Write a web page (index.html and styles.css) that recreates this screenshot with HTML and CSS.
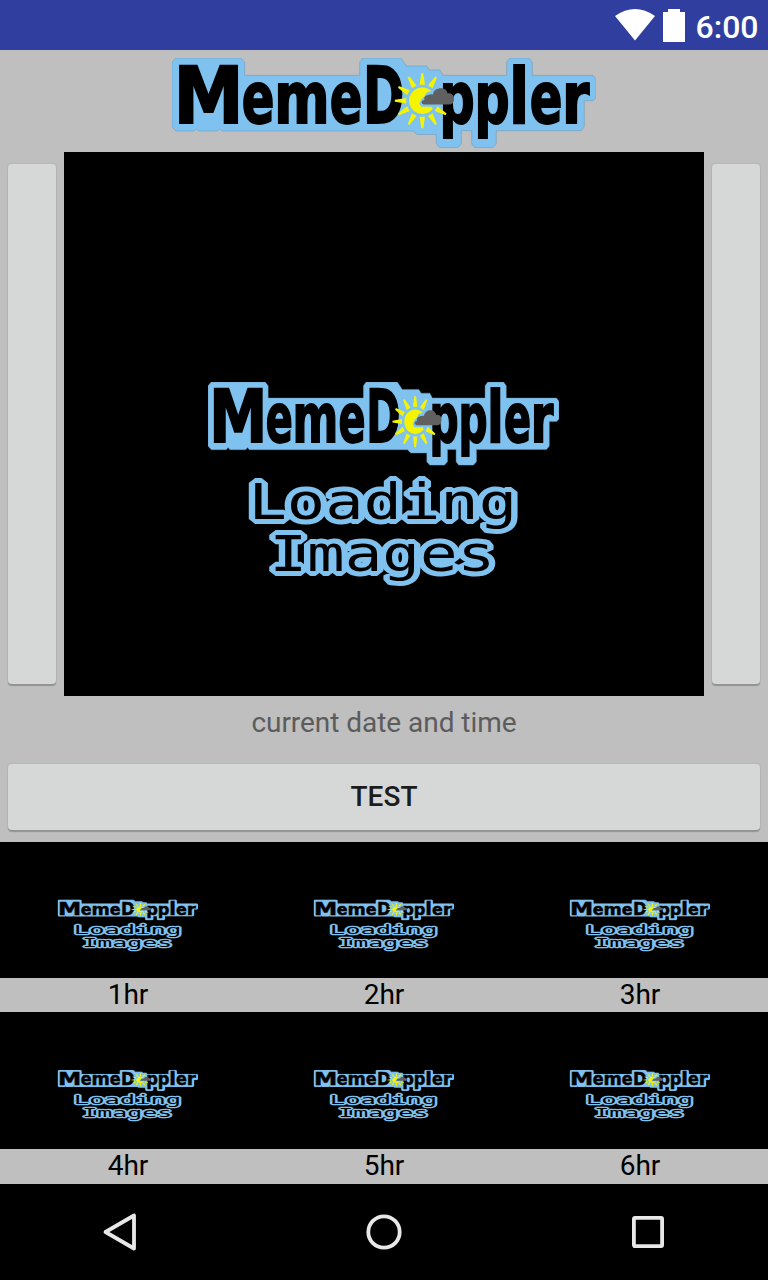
FILE: index.html
```html
<!DOCTYPE html>
<html lang="en">
<head>
<meta charset="utf-8">
<title>MemeDoppler</title>
<link rel="stylesheet" href="styles.css">
</head>
<body>
<svg class="defs" aria-hidden="true">
  <defs>
    <symbol id="wordmark" viewBox="0 0 424 90" preserveAspectRatio="none">
      <path class="plate" d="M4 0H69L72.7 4V17.3H187.7V4L191 0H228.7L234.7 8H254.7L257.5 12H268L271 17.3H334.7V4L338 0H357L360.3 4V17.3H421L424 21V40L421 42.7H412.3V69L409 72.7H324.3V86L320.5 89.7H303L299.7 86V72.7H289.3V86L285.5 89.7H268L264.3 86V76.5H245L241 73H50L47.7 70.7L45.5 73H26.5L24.3 70.7L22 73H4L0 69V4Z"/>
      <g class="letters"><text class="cap" transform="translate(1.5 65) scale(.904 1)">M</text><text transform="translate(69.7 65) scale(.67 1)">e</text><text transform="translate(102.2 65) scale(.738 1)">m</text><text transform="translate(157.7 65) scale(.67 1)">e</text><text class="cap" transform="translate(191.1 65) scale(.637 1)">D</text><text transform="translate(267.6 65) scale(.683 1)">p</text><text transform="translate(302.6 65) scale(.683 1)">p</text><text class="tall" transform="translate(336.9 65) scale(.775 1)">l</text><text transform="translate(357.7 65) scale(.67 1)">e</text><text transform="translate(390 65) scale(.77 1)">r</text></g>
      <g class="sun" transform="translate(250.3 42.7)">
        <path id="ray" d="M-2.7-16L-1-27.5H1L2.7-16Z"/>
        <use href="#ray" transform="rotate(30)"/>
        <use href="#ray" transform="rotate(120)"/>
        <use href="#ray" transform="rotate(150)"/>
        <use href="#ray" transform="rotate(180)"/>
        <use href="#ray" transform="rotate(210)"/>
        <use href="#ray" transform="rotate(240)"/>
        <use href="#ray" transform="rotate(270)"/>
        <use href="#ray" transform="rotate(300)"/>
        <use href="#ray" transform="rotate(330)"/>
        <path d="M9-9.600A13.200 13.200 0 1 0 10.500 8L9 6H-1L-3 3L-1-1.500L2-4L4-8Z"/>
      </g>
      <path class="cloud" d="M252 46.500Q249.500 46 249.500 44Q250 42 252.500 42Q251 38 256 37Q259 36 261 36.500C262 28.500 275 28.500 275.500 35.500C280 34.500 282.500 38 282 41.500Q281.500 46.500 277 46.500Z"/>
    </symbol>
    <symbol id="loading-art" viewBox="0 0 640 544" preserveAspectRatio="none">
      <rect width="640" height="544"/>
      <use href="#wordmark" x="144" y="230" width="351" height="83.500"/>
      <text class="pixel" transform="translate(184.500 366.500) scale(1.275 1)">Loading</text>
      <text class="pixel images" transform="translate(205.500 418.500) scale(1.275 1)">Images</text>
    </symbol>
  </defs>
</svg>
<div class="screen">
  <div class="status">
    <svg width="40" height="32" viewBox="0 0 40 32"><path fill="#fff" d="M0 7Q20-7 40 7L20 31.500Z"/></svg>
    <svg class="battery" width="22" height="33" viewBox="0 0 22 33"><path fill="#fff" d="M5 0H17V3H22V33H0V3H5Z"/></svg>
    <span class="clock">6:00</span>
  </div>
  <header class="brand"><svg width="424" height="90"><use href="#wordmark" width="424" height="90"/></svg></header>
  <main class="viewer">
    <button class="btn side" aria-label="Previous"></button>
    <svg class="stage" width="640" height="544"><use href="#loading-art" width="640" height="544"/></svg>
    <button class="btn side" aria-label="Next"></button>
  </main>
  <p class="caption">current date and time</p>
  <button class="btn test">TEST</button>
  <section class="grid">
    <figure><svg class="thumb"><use href="#loading-art" width="100%" height="100%"/></svg><figcaption>1hr</figcaption></figure>
    <figure><svg class="thumb"><use href="#loading-art" width="100%" height="100%"/></svg><figcaption>2hr</figcaption></figure>
    <figure><svg class="thumb"><use href="#loading-art" width="100%" height="100%"/></svg><figcaption>3hr</figcaption></figure>
    <figure><svg class="thumb"><use href="#loading-art" width="100%" height="100%"/></svg><figcaption>4hr</figcaption></figure>
    <figure><svg class="thumb"><use href="#loading-art" width="100%" height="100%"/></svg><figcaption>5hr</figcaption></figure>
    <figure><svg class="thumb"><use href="#loading-art" width="100%" height="100%"/></svg><figcaption>6hr</figcaption></figure>
  </section>
  <nav class="nav">
    <svg width="48" height="48" viewBox="0 0 48 48"><path d="M38 7.500V40.500L9.500 24Z"/></svg>
    <svg width="48" height="48" viewBox="0 0 48 48"><circle cx="24" cy="24" r="15.700"/></svg>
    <svg width="48" height="48" viewBox="0 0 48 48"><rect x="9.900" y="9.900" width="28.200" height="28.200" rx="1"/></svg>
  </nav>
</div>
</body>
</html>
```
FILE: styles.css
```css
* { box-sizing: border-box; }
body { margin: 0; font-family: Roboto, sans-serif; background: #bfbfbf; }
svg { display: block; flex: none; }
.defs { position: absolute; width: 0; height: 0; }
.screen { width: 768px; height: 1280px; display: flex; flex-direction: column; overflow: hidden; }

.status { height: 50px; background: #303f9f; display: flex; justify-content: flex-end; align-items: flex-start; padding: 9px 9.5px 0 0; color: #fff; }
.battery { margin-left: 7.5px; }
.clock { margin-left: 11px; font-size: 32px; font-weight: 500; line-height: 36px; }

.brand { height: 102px; padding-top: 8px; display: flex; justify-content: center; }
.viewer { height: 544px; display: flex; justify-content: space-between; padding: 0 8px; }
.btn { border: 0; padding: 0; border-radius: 4px; background: #d6d8d7; color: #1c1c1c; box-shadow: 0 2px 1px #929392, 0 0 2px #a4a5a4; font: 500 28px/66px Roboto, sans-serif; }
.side { width: 48px; height: 520px; margin-top: 12px; }

.caption { margin: 0; height: 68px; padding-top: 10px; text-align: center; font-size: 28px; line-height: 33px; letter-spacing: -.04px; color: #5c5c5c; }
.test { height: 66px; margin: 0 8px 12px; }

.grid { display: grid; grid-template-columns: repeat(3, 256px); grid-template-rows: 170px 172px; }
figure { margin: 0; display: flex; flex-direction: column; }
.thumb { width: 256px; flex: 1; background: #000; }
figcaption { height: 34px; line-height: 33px; text-align: center; font-size: 28px; color: #000; }
figure:nth-child(n+4) figcaption { height: 35px; }

.nav { height: 96px; background: #000; display: flex; justify-content: space-between; align-items: center; padding: 0 96px; }
.nav svg { fill: none; stroke: #e8e8e8; stroke-width: 3.8; stroke-linejoin: round; }

.plate { fill: #7fc1ef; stroke: #6b94b0; stroke-width: .5; }
.letters { font-family: "DejaVu Sans", sans-serif; font-weight: 700; font-size: 72px; fill: #000; stroke: #000; stroke-width: 2; }
.letters .cap { font-size: 78px; }
.letters .tall { font-size: 76px; }
.sun { fill: #f4f400; }
.cloud { fill: #606060; }
.pixel { font-family: "DejaVu Sans Mono", monospace; font-size: 50px; fill: #000; stroke: #7fc1ef; stroke-width: 10; stroke-linejoin: bevel; paint-order: stroke; }
.images { font-size: 49px; }
```
